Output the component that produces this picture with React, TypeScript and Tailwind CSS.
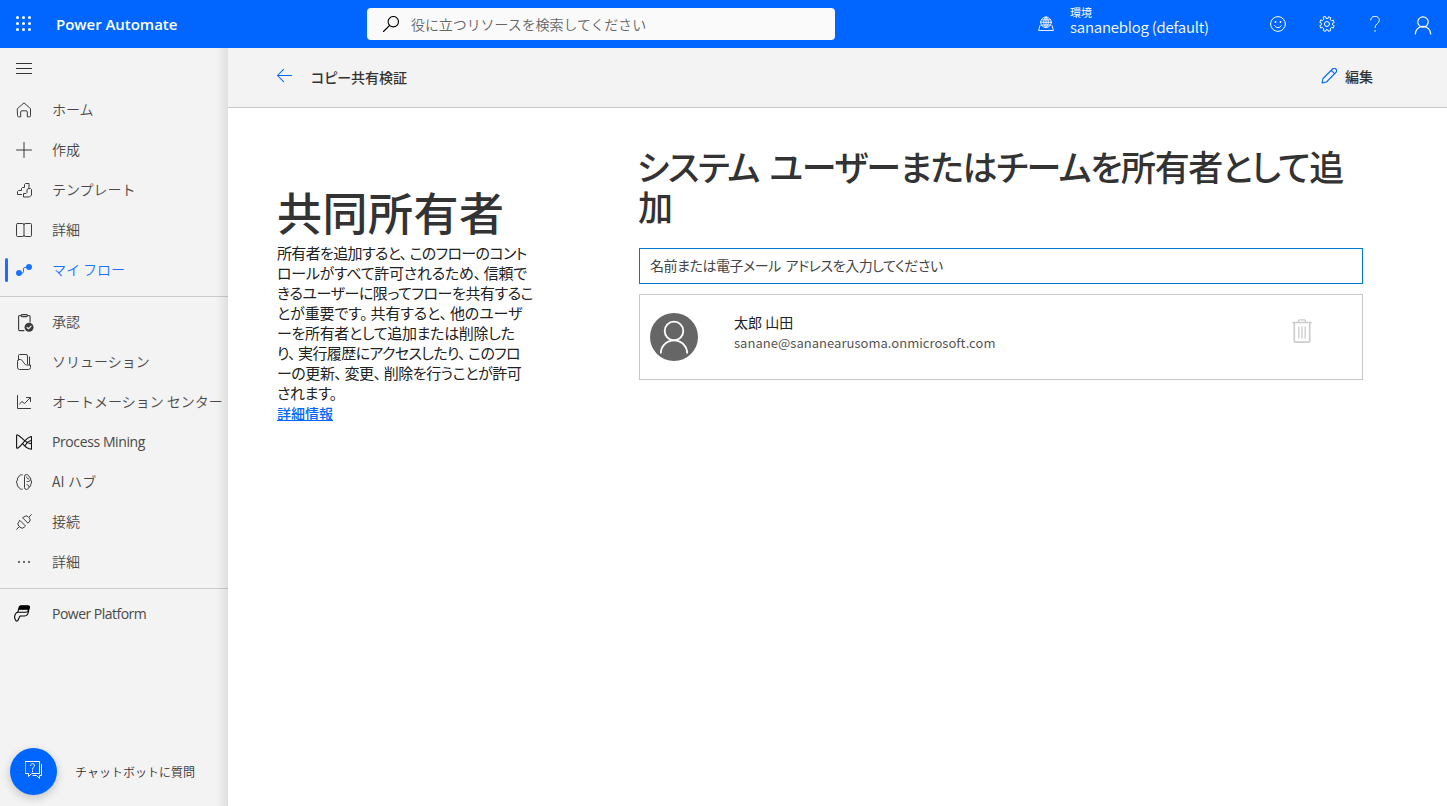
import React from "react";

const stroke = {
  fill: "none",
  stroke: "currentColor",
  strokeWidth: 1,
  strokeLinecap: "round" as const,
  strokeLinejoin: "round" as const,
};

function Icon({ children, className = "size-4" }: { children: React.ReactNode; className?: string }) {
  return (
    <svg viewBox="0 0 16 16" className={`shrink-0 ${className}`} {...stroke}>
      {children}
    </svg>
  );
}

const icons = {
  home: (
    <Icon>
      <path d="M1.500 6.600 8 .9l6.500 5.700v7.200a1 1 0 0 1-1 1h-2.200V10a1.200 1.200 0 0 0-1.200-1.200H5.900A1.200 1.200 0 0 0 4.700 10v4.800H2.500a1 1 0 0 1-1-1z" />
    </Icon>
  ),
  plus: (
    <Icon>
      <path d="M8 .5v15M.5 8h15" />
    </Icon>
  ),
  template: (
    <Icon>
      <path d="M5.500 12.500h-4V9.500l1-1h3v-2l1-1h2v-3l1-1h3.500v4l-1 1" />
      <path d="M13 6.500h1.500l1 1v5.500l-2 2H7.500v-3.500h2.500l1-1V8z" />
    </Icon>
  ),
  book: (
    <Icon>
      <path d="M8 2.300v11.400M1.500 1.500h5.200A1.300 1.300 0 0 1 8 2.800a1.300 1.300 0 0 1 1.300-1.300h5.200a1 1 0 0 1 1 1v11a1 1 0 0 1-1 1H9.300A1.300 1.300 0 0 1 8 13.200a1.300 1.300 0 0 1-1.300 1.300H1.500a1 1 0 0 1-1-1v-11a1 1 0 0 1 1-1z" />
    </Icon>
  ),
  flow: (
    <Icon>
      <circle cx="3" cy="11" r="3" fill="currentColor" stroke="none" />
      <circle cx="13" cy="5" r="3" fill="currentColor" stroke="none" />
      <path d="M5 11h1.200A1.300 1.300 0 0 0 7.500 9.700V6.800A1.300 1.300 0 0 1 8.800 5.500H11" />
    </Icon>
  ),
  approval: (
    <Icon className="size-[18px] -mb-0.5 -mr-0.5">
      <path d="M7 14.800H3.300a1 1 0 0 1-1-1V2.300a1 1 0 0 1 1-1h8.200a1 1 0 0 1 1 1V7" />
      <rect x="4.500" y=".5" width="5.700" height="1.800" rx=".9" fill="#f3f3f3" />
      <circle cx="11.600" cy="11.800" r="4" fill="currentColor" stroke="none" />
      <path d="m9.800 12 1.300 1.100 2.300-2.300" stroke="#f3f3f3" />
    </Icon>
  ),
  solution: (
    <Icon>
      <path d="M2.500 6v-4.500a1 1 0 0 1 1-1h6.500a1.500 1.500 0 0 1 1.500 1.500v8M13.500 3v8M1.500 7a1.500 1.500 0 0 1 1.500-1.500h1.500a1.500 1.500 0 0 1 1.300.6l3.200 4.200a1.500 1.500 0 0 0 1.200.700h4.300v2.500a2 2 0 0 1-2 2H3.500a2 2 0 0 1-2-2z" />
    </Icon>
  ),
  chart: (
    <Icon>
      <path d="M1.500 1.500v13h13M3.500 10 6 7.500l2.500 2 5.500-5.500M10.500 3.500h4v4" />
    </Icon>
  ),
  mining: (
    <Icon>
      <g stroke="#111" strokeWidth="1.100">
        <path d="M.6 13.500v-12c0-.6.500-.9 1.100-.6C6 2.800 8.500 9.500 15.500 9.800M.6 13.500c0 .7.700 1 1.400.5C6.500 11 9 3.800 15.500 2.500v12.800C11 14.800 9.300 13 7 10.200M15.500 6.500C12.500 6.800 11 8.500 9.200 11.500" />
      </g>
    </Icon>
  ),
  brain: (
    <Icon>
      <path d="M6.300.8C4.800.3 3.200 1.100 3 2.700 1.500 3.300 1.100 4.700 1.600 6 .2 7.100.2 9 1.400 10c-.5 1.500.3 2.800 1.600 3.300.3 1.500 1.700 2.300 3.300 1.900M8.500 2.300A1.800 1.800 0 0 1 10.300.5c1.500 0 2.600 1 2.700 2.300 1.500.4 2.100 1.800 1.600 3.200 1.400 1.100 1.300 3 .1 4 .4 1.500-.4 2.800-1.700 3.200-.3 1.400-1.400 2.300-2.700 2.300a1.800 1.800 0 0 1-1.800-1.800zM10.500 3c.3 1.300 1.200 2 2.400 2M14.300 6.200c-.8 1.300-2 1.700-3.300 1.300M12.800 13c.3-1.300-.5-2.300-1.800-2.300" />
    </Icon>
  ),
  plug: (
    <Icon>
      <path d="m.7 15.300 2.300-2.300M13.300 2.700 15.400.6" />
      <path d="m4 6.500 5.500 5.500-1.200 1.200a3 3 0 0 1-4.300 0l-1.200-1.200a3 3 0 0 1 0-4.300z" />
      <path d="M6.800 4 12 9.200l1.200-1.200a3 3 0 0 0 0-4.300L12.300 2.800a3 3 0 0 0-4.300 0z" />
    </Icon>
  ),
  more: (
    <Icon>
      <g fill="currentColor" stroke="none">
        <circle cx="3" cy="8" r="1" />
        <circle cx="8" cy="8" r="1" />
        <circle cx="13" cy="8" r="1" />
      </g>
    </Icon>
  ),
  platform: (
    <svg viewBox="0 0 18 18" className="-ml-0.5 h-[18px] w-[18px] shrink-0" {...stroke}>
      <g stroke="#000" strokeWidth="1.100">
        <path d="m4.700 4.200.6-2.200C5.600 1 6.200.8 7 .8h7c1.200 0 1.700.8 1.400 1.900L15 4.500c-.3-.2-.8-.3-1.300-.3z" fill="#000" />
        <path d="M4.600 4.200 3.800 7.200h8.400c1.200 0 2-1 2.300-2.400M14.700 5.500c-.4 3.200-1.700 5.500-4.200 5.500H6M3.800 7.200C2 7.600.8 9.500.6 12c0 1.800 1.200 4.200 2.200 4.200 1.200 0 1.600-1.700 2.200-3.200.4-1.200.7-2 1.500-2" />
      </g>
    </svg>
  ),
};

type Item = { label: string; icon: React.ReactNode; active?: boolean; text?: string };

const japanese = "-mt-[3px] font-[350]";
const latin = "font-['Open_Sans',sans-serif]";

function NavItem({ label, icon, active, text = japanese }: Item) {
  return (
    <div className={`flex h-10 items-center ${active ? "text-[#1a73ff]" : "text-[#3c3b3a]"}`}>
      <span className={`ml-[5px] h-6 w-[3px] rounded-full ${active ? "bg-[#1a6fff]" : ""}`} />
      <span className="ml-2 flex w-9 items-center">{icon}</span>
      <span className={`text-sm whitespace-nowrap ${active ? "" : "text-[#4a4948]"} ${text}`}>{label}</span>
    </div>
  );
}

function Divider() {
  return (
    <div className="flex h-3 items-center">
      <div className="h-px w-full bg-[#cbcbcb]" />
    </div>
  );
}

const primary: Item[] = [
  { label: "ホーム", icon: icons.home },
  { label: "作成", icon: icons.plus },
  { label: "テンプレート", icon: icons.template },
  { label: "詳細", icon: icons.book },
  { label: "マイ フロー", icon: icons.flow, active: true },
];

const secondary: Item[] = [
  { label: "承認", icon: icons.approval },
  { label: "ソリューション", icon: icons.solution },
  { label: "オートメーション センター", icon: icons.chart },
  { label: "Process Mining", icon: icons.mining, text: `${latin} tracking-[-0.4px]` },
  { label: "AI ハブ", icon: icons.brain, text: "-mt-[3px] font-[350] tracking-[0.15px]" },
  { label: "接続", icon: icons.plug },
  { label: "詳細", icon: icons.more },
];

const description = [
  { text: "所有者を追加すると、このフローのコント", cls: "tracking-[-0.65px]" },
  { text: "ロールがすべて許可されるため、信頼で", cls: "tracking-[-0.26px]" },
  { text: "きるユーザーに限ってフローを共有するこ", cls: "tracking-[-0.45px]" },
  { text: "とが重要です。共有すると、他のユーザ", cls: "tracking-[-0.12px]" },
  { text: "ーを所有者として追加または削除した", cls: "tracking-[-0.32px]" },
  { text: "り、実行履歴にアクセスしたり、このフロ", cls: "tracking-[-0.64px]" },
  { text: "ーの更新、変更、削除を行うことが許可", cls: "tracking-[-0.45px]" },
  { text: "されます。", cls: "tracking-[-0.4px]" },
];

function withPauses(text: string) {
  return text.split(/(?<=[、。])/).map((part, i) => (
    <span key={i} className={/[、。]$/.test(part) ? "mr-[3px]" : ""}>
      {part}
    </span>
  ));
}

function TopBar() {
  return (
    <header className="flex h-12 shrink-0 items-center bg-[#0066ff] text-white">
      <svg viewBox="0 0 16 16" className="ml-4 size-4" fill="currentColor">
        {[1.5, 7.5, 13.5].map((y) => [1.5, 7.5, 13.5].map((x) => <circle key={`${x}-${y}`} cx={x} cy={y} r="1.500" />))}
      </svg>
      <div className={`${latin} mt-px ml-6 w-[311px] text-[15px] font-semibold tracking-[-0.03px]`}>Power Automate</div>
      <div className="flex h-8 w-[468px] items-center rounded bg-[#fafafa] pl-4 text-[#666]">
        <svg viewBox="0 0 16 16" className="size-4 text-black" {...stroke} strokeWidth={1.1}>
          <circle cx="10.300" cy="5.700" r="5.200" />
          <path d="M6.500 9.500.5 15.500" />
        </svg>
        <span className="ml-3 text-sm font-[350] tracking-[-0.08px]">役に立つリソースを検索してください</span>
      </div>
      <svg viewBox="0 0 16 16" className="ml-[203px] size-4" {...stroke} strokeWidth={0.9}>
        <circle cx="8" cy="6.300" r="5.300" />
        <path d="M8 1v10.600M2.700 6.300h10.600M3.500 3.800h9M3.500 9h9M8 1c-3.200 2.500-3.200 8 0 10.600M8 1c3.200 2.500 3.200 8 0 10.600M2 9.500.6 14.500h14.800l-1.400-5" />
      </svg>
      <div className="ml-4 w-[200px]">
        <div className="-mt-2 text-[11px] leading-[14px]">環境</div>
        <div className="text-[15px] leading-4 font-[350] tracking-[-0.22px] whitespace-nowrap">sananeblog (default)</div>
      </div>
      <svg viewBox="0 0 16 16" className="size-4" {...stroke}>
        <circle cx="8" cy="8" r="7.400" />
        <path d="M4.700 9.700c1.500 2.700 5.100 2.700 6.600 0" />
        <circle cx="5.500" cy="6" r=".9" fill="currentColor" stroke="none" />
        <circle cx="10.500" cy="6" r=".9" fill="currentColor" stroke="none" />
      </svg>
      <svg viewBox="0 0 16 16" className="ml-[33px] size-4" {...stroke}>
        <circle cx="8" cy="8" r="2.500" />
        <path d="m6.500.8.500 1.600h2L9.500.8l2.300.9-.8 1.600 1.600 1.500 1.600-.7 1 2.400-1.600.7v1.800l1.600.7-1 2.400-1.600-.8-1.500 1.600.7 1.600-2.300.9-.6-1.600H7l-.6 1.600-2.200-.9.7-1.600-1.500-1.600-1.600.8-1-2.400 1.600-.7V7L.8 6.300l1-2.400 1.600.7 1.500-1.500-.7-1.500z" />
      </svg>
      <svg viewBox="0 0 16 16" className="ml-8 size-4" {...stroke}>
        <path d="M3.700 4A4.300 4.300 0 0 1 8 .3c2.500 0 4.300 1.500 4.300 3.900 0 3.500-4.300 3.300-4.300 7.300" />
        <circle cx="8" cy="15" r=".8" fill="currentColor" stroke="none" />
      </svg>
      <svg viewBox="0 0 18 20" className="mt-px ml-[31px] h-5 w-[18px]" {...stroke} strokeWidth={1.2}>
        <circle cx="9" cy="7" r="5.200" />
        <path d="M1.300 19a7.700 7.700 0 0 1 15.400 0" />
      </svg>
    </header>
  );
}

function Sidebar() {
  return (
    <aside className="relative flex w-[228px] shrink-0 flex-col bg-[#f3f3f3]">
      <div className="flex h-[42px] items-center pl-4 text-[#333]">
        <svg viewBox="0 0 16 12" className="h-3 w-4" {...stroke} strokeLinecap="butt">
          <path d="M0 .5h16M0 5.500h16M0 10.500h16" />
        </svg>
      </div>
      {primary.map((item) => (
        <NavItem key={item.label} {...item} />
      ))}
      <Divider />
      {secondary.map((item) => (
        <NavItem key={item.label} {...item} />
      ))}
      <Divider />
      <NavItem label="Power Platform" icon={icons.platform} text={`${latin} tracking-[-0.52px]`} />
      <div className="mt-auto mb-[11px] flex items-center pl-2.5">
        <div className="flex size-[47px] items-center justify-center rounded-full bg-[#0066ff] text-white shadow-[0_3px_10px_rgba(0,0,0,0.2)]">
          <svg viewBox="0 0 18 18" className="-mt-1 size-[18px]" {...stroke} strokeLinejoin="miter">
            <path d="M.5.500h14v12H6.500L3.500 15.500v-3h-3zM16.500 3.500v11h-2v3l-3-3H8" />
            <path d="M5.500 4.500C5.500 2 9.500 2 9.500 4.500c0 1.800-2 1.700-2 3.700M7.500 9.800v1" />
          </svg>
        </div>
        <span className="ml-[18px] text-xs font-[350] text-[#333]">チャットボットに質問</span>
      </div>
      <div className="pointer-events-none absolute inset-y-0 right-0 w-3 bg-linear-to-l from-black/8 to-transparent" />
    </aside>
  );
}

function Owners() {
  return (
    <section className="mt-[38px] ml-[105px] w-[724px]">
      <h2 className="-ml-0.5 text-[35px] leading-10 font-medium tracking-[-1.4px] whitespace-nowrap text-[#333] [font-feature-settings:'palt'] [word-spacing:4px]">
        <span className="block">システム ユーザーまたはチームを所有者として追</span>
        <span className="block pl-px">加</span>
      </h2>
      <div className="mt-[22px] flex h-9 items-center border border-[#0078d4] pb-0.5 pl-2.5 text-sm tracking-[-0.46px] text-[#444] [font-feature-settings:'palt'] [word-spacing:2px]">
        名前または電子メール アドレスを入力してください
      </div>
      <div className="mt-2.5 flex h-[86px] border border-[#c8c8c8] px-2.5">
        <svg viewBox="0 0 48 48" className="mt-[18px] size-12" fill="none" stroke="#fff" strokeWidth="1.800">
          <circle cx="24" cy="24" r="24" fill="#666" stroke="none" />
          <circle cx="24" cy="18" r="9.300" />
          <path d="M10.800 40.500a13.200 13.200 0 0 1 26.400 0" />
        </svg>
        <div className="mt-[17px] ml-9 grow">
          <div className="text-sm leading-5 text-[#222]">太郎 山田</div>
          <div className="mt-px text-[13px] leading-5 tracking-[0.03px] text-[#555]">sanane@sananearusoma.onmicrosoft.com</div>
        </div>
        <svg viewBox="0 0 20 24" className="mt-6 mr-10 h-6 w-5" fill="none" stroke="#ccc" strokeWidth="1.300">
          <path d="M.2 3.500h19.600M6.500 3.300V2c0-.8.400-1.200 1.200-1.200h4.600c.8 0 1.200.4 1.200 1.200v1.300" />
          <path d="M2.300 3.500v18.200c0 1 .4 1.400 1.400 1.400h12.600c1 0 1.400-.4 1.400-1.400V3.500" strokeWidth="1.700" />
          <path d="M6.800 7.500v12M10 7.500v12M13.200 7.500v12" />
        </svg>
      </div>
    </section>
  );
}

export default function App() {
  return (
    <div className="flex h-[806px] w-[1447px] flex-col overflow-hidden bg-white font-['Noto_Sans_CJK_JP',sans-serif]" lang="ja">
      <TopBar />
      <div className="flex min-h-0 grow">
        <Sidebar />
        <main className="flex grow flex-col">
          <div className="flex h-[60px] items-center border-b border-[#c8c8c8] bg-[#f3f3f3] pr-[74px] pl-[49px] text-[#333]">
            <svg viewBox="0 0 16 16" className="-mt-[5px] size-[15px] text-[#0066ff]" {...stroke} strokeWidth={1.1}>
              <path d="M.5 8h15M7 1.500.5 8 7 14.500" />
            </svg>
            <span className="-mt-0.5 ml-[19px] grow text-sm font-medium [font-feature-settings:'palt']">コピー共有検証</span>
            <svg viewBox="0 0 16 16" className="-mt-[3px] size-4 text-[#0066ff]" {...stroke} strokeWidth={1.1}>
              <path d="M1 15l1-4.500L11.500 1a2.100 2.100 0 0 1 3.400 3.400L5.500 14zM10.300 2.300l3.500 3.500" />
            </svg>
            <span className="-mt-1 ml-2 text-sm font-medium">編集</span>
          </div>
          <div className="flex">
            <section className="mt-[78px] ml-[49px] w-[257px] text-[#222]">
              <h1 className="h-[57px] text-[45px] leading-[52px] font-medium tracking-[0.5px] text-[#333]">共同所有者</h1>
              <p className="text-[15px] leading-5 whitespace-nowrap [font-feature-settings:'palt']">
                {description.map((line) => (
                  <span key={line.text} className={`block ${line.cls}`}>
                    {withPauses(line.text)}
                  </span>
                ))}
              </p>
              <a className="block text-sm leading-5 font-medium text-[#0066ff] underline">詳細情報</a>
            </section>
            <Owners />
          </div>
        </main>
      </div>
    </div>
  );
}
